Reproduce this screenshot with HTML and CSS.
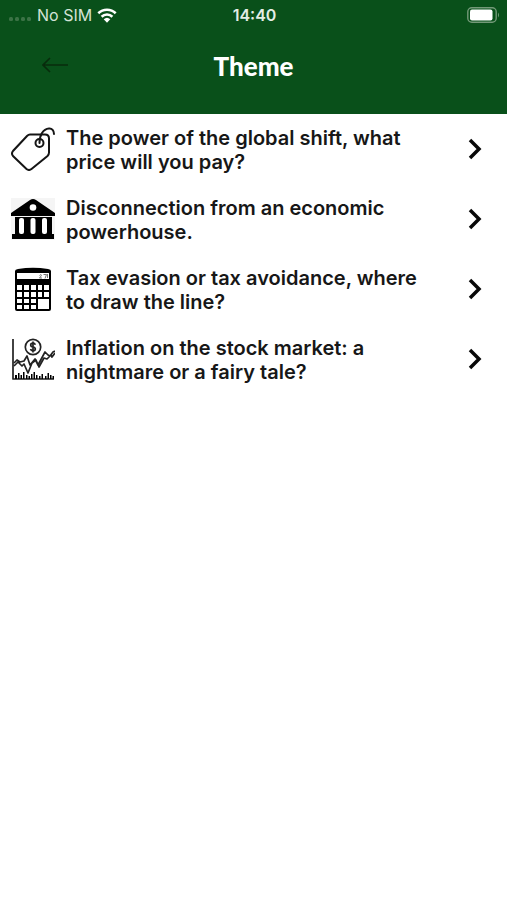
FILE: index.html
```html
<!DOCTYPE html>
<html lang="en">
<head>
<meta charset="utf-8">
<meta name="viewport" content="width=device-width, initial-scale=1">
<title>Theme</title>
<link rel="stylesheet" href="styles.css">
</head>
<body>
<header class="header">
  <div class="status">
    <div class="carrier">
      <svg class="signal" viewBox="0 0 23 6" aria-hidden="true"><rect x="0" y="1" width="4" height="4" rx="1.500"/><rect x="6" y="1" width="4" height="4" rx="1.500"/><rect x="12" y="1" width="4" height="4" rx="1.500"/><rect x="18" y="1" width="4" height="4" rx="1.500"/></svg>
      <span>No SIM</span>
      <svg class="wifi" viewBox="0 0 20 15" aria-hidden="true"><path d="M1.300 5.200a12.500 12.500 0 0 1 17.400 0M4.600 8.700a7.800 7.800 0 0 1 10.800 0"/><path class="wifi-dot" d="M6.700 11.200a4.800 4.800 0 0 1 6.600 0L10 14.700z"/></svg>
    </div>
    <time class="clock">14:40</time>
    <svg class="battery" viewBox="0 0 33 16" aria-hidden="true"><rect class="case" x=".8" y=".8" width="28.400" height="14.400" rx="4"/><rect class="charge" x="3" y="2.500" width="22.500" height="11" rx="2"/><path class="tip" d="M31 5.500q2 2.500 0 5z"/></svg>
  </div>
  <div class="titlebar">
    <button class="back" type="button" aria-label="Back"><svg viewBox="0 0 26 16" aria-hidden="true"><path d="M26 8H1M8 1 1 8l7 7"/></svg></button>
    <h1>Theme</h1>
  </div>
</header>
<main>
  <ul class="themes">
    <li><a class="theme" href="#shift">
      <svg class="icon" viewBox="0 0 44 44" aria-hidden="true"><g class="outline"><path d="M19 7.500h15q4 0 4 4v14q0 2-1.500 3.500L20.500 42q-2.500 2-5 0L2 29q-2-2.500 0-5L16 9Q17.500 7.500 19 7.500z"/><circle cx="28.500" cy="16" r="4"/><path d="M28.500 16C28.500 8 32 2 38 1.500c3-.3 5 2 5 5.500"/></g></svg>
      <span class="label">The power of the global shift, what price will you pay?</span>
      <svg class="chevron" viewBox="0 0 14 22" aria-hidden="true"><path d="m2 2 9 9-9 9"/></svg>
    </a></li>
    <li><a class="theme" href="#disconnection">
      <svg class="icon" viewBox="0 0 44 44" aria-hidden="true"><path class="paper" d="M0 1h44v42H0z"/><path d="M19 3q3-2 6 0l19 13v3H0v-3zM4 20h37v18H4zM1 37h42v5H1z"/><g class="cutout"><circle cx="22" cy="10.500" r="3.300"/><rect x="8" y="21" width="5" height="16" rx="2"/><rect x="19.500" y="21" width="5" height="16" rx="2"/><rect x="31" y="21" width="5" height="16" rx="2"/></g></svg>
      <span class="label">Disconnection from an economic powerhouse.</span>
      <svg class="chevron" viewBox="0 0 14 22" aria-hidden="true"><path d="m2 2 9 9-9 9"/></svg>
    </a></li>
    <li><a class="theme" href="#tax">
      <svg class="icon" viewBox="0 0 44 44" aria-hidden="true"><path d="M4 4q0-1.500 3-2Q22-.5 37 2q3 .5 3 2v38q0 2-2 2H6q-2 0-2-2z"/><path class="cutout" d="M6 6h32v6H6zM6 18h5v5H6zM13 18h5v5h-5zM20 18h5v5h-5zM27 18h4v5h-4zM33 18h5v5h-5zM6 25h5v5H6zM13 25h5v5h-5zM20 25h5v5h-5zM27 25h4v5h-4zM33 25h5v5h-5zM6 32h5v4H6zM13 32h5v4h-5zM20 32h5v4h-5zM27 32h11v10H27zM6 38h5v4H6zM13 38h5v4h-5zM20 38h5v4h-5z"/><path class="digits" d="M28.500 8.500q2-2 2 0l-2 2.500h2.500M32.500 7.500h3l-1.500 4M36.500 7v4"/></svg>
      <span class="label">Tax evasion or tax avoidance, where to draw the line?</span>
      <svg class="chevron" viewBox="0 0 14 22" aria-hidden="true"><path d="m2 2 9 9-9 9"/></svg>
    </a></li>
    <li><a class="theme" href="#inflation">
      <svg class="icon" viewBox="0 0 44 44" aria-hidden="true"><g class="plot"><path d="M2 2v40H43"/><circle cx="22" cy="10" r="7.700"/><path d="M24.300 7.800q-.5-1.600-2.300-1.600c-3.200 0-3 3.300 0 3.800s3.200 3.800 0 3.800q-2 0-2.500-1.700M22 4.500v11"/><path d="m3 26 3-3 3 2 4-1 3-5 3 9 5-6 3 6 7-13 3 3 2 1 3-4 2-1M3 29l4-4 4 4 2-2 4 9 4-10 4-3 3 7 5-9 3 1 4-4 1 2 3-4"/></g><path d="M4 38h2v4H4zM7 36h1.500v6H7zM9.500 38H11v4H9.500zM12 35h1.500v7H12zM15 38h1.500v4H15zM17.500 39H19v3h-1.500zM20 37h1.500v5H20zM22.500 35H24v7h-1.500zM25 38h1.500v4H25zM28 39h1.500v3H28zM30.500 37H32v5h-1.500zM34 39h1.500v3H34zM36.500 36H38v6h-1.500zM39 38h1.500v4H39zM41.500 39H43v3h-1.500z"/></svg>
      <span class="label">Inflation on the stock market: a nightmare or a fairy tale?</span>
      <svg class="chevron" viewBox="0 0 14 22" aria-hidden="true"><path d="m2 2 9 9-9 9"/></svg>
    </a></li>
  </ul>
</main>
</body>
</html>
```
FILE: styles.css
```css
* { box-sizing: border-box; }
body { margin: 0; background: #fff; color: #171717; font-family: Inter, "Liberation Sans", sans-serif; }
svg { display: block; flex: none; }

.header { background: #09501a; color: #fff; padding-bottom: 24px; }
.status {
  display: grid;
  grid-template-columns: 1fr auto 1fr;
  align-items: center;
  height: 30px;
  padding: 0 7px 0 9px;
  font-size: 16px;
  line-height: 20px;
}
.carrier { display: flex; align-items: center; gap: 5px; color: #d3e2d5; }
.signal { width: 23px; height: 6px; margin-top: 8px; fill: #3c7346; }
.wifi { width: 20px; height: 15px; fill: none; stroke: #fff; stroke-width: 2.6; }
.wifi-dot { fill: #fff; stroke: none; }
.clock { font-weight: 600; color: #e3ede5; }
.battery { width: 33px; height: 16px; justify-self: end; }
.case { fill: none; stroke: #739978; stroke-width: 1.4; }
.charge { fill: #fff; }
.tip { fill: #739978; }

.titlebar {
  display: grid;
  grid-template-columns: 1fr auto 1fr;
  align-items: center;
  height: 60px;
  padding: 0 42px;
}
.titlebar h1 { margin: 0; padding-top: 12px; font: 900 26px/36px Lato, sans-serif; }
.back { justify-self: start; padding: 9px 0 0; border: 0; background: none; cursor: pointer; }
.back svg { width: 26px; height: 16px; fill: none; stroke: #082b0c; stroke-width: 1.6; }

.themes { list-style: none; margin: 0; padding: 0; }
.theme {
  display: flex;
  align-items: center;
  gap: 11px;
  min-height: 70px;
  padding: 0 25px 0 11px;
  color: inherit;
  text-decoration: none;
}
.label { flex: 1; padding: 2px 36px 0 0; font-size: 20px; line-height: 24px; font-weight: 600; }
.icon { width: 44px; height: 44px; fill: #000; }
.outline { fill: none; stroke: #151515; stroke-width: 2; stroke-linecap: round; }
.paper { fill: #f5f5f5; }
.cutout { fill: #fff; }
.digits { fill: none; stroke: #777; stroke-width: 1; }
.plot { fill: none; stroke: #222; stroke-width: 1.7; stroke-linejoin: round; }
.chevron { width: 14px; height: 22px; fill: none; stroke: #080808; stroke-width: 3.5; }
```
